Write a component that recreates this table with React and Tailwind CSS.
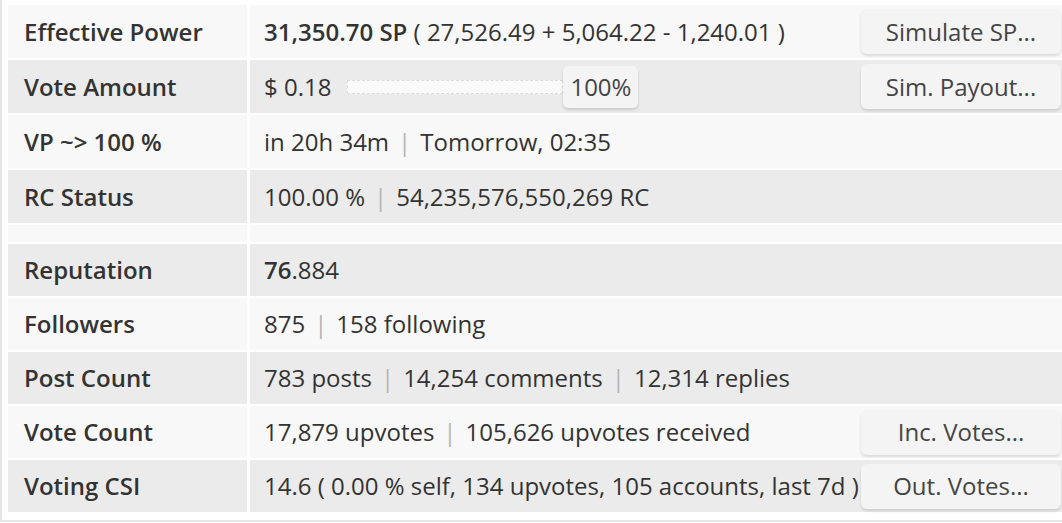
const Sep = () => <span className="px-[9px] text-[#b5b5b5]">|</span>

const Btn = ({ children }) => (
  <div className="w-[200px] h-[45px] flex items-center justify-center rounded-[6px] bg-[#f4f4f4] text-[#444] shadow-[0_2px_3px_rgba(0,0,0,0.12)]">
    {children}
  </div>
)

const Row = ({ label, shade, tall, children, button }) => {
  const bg = shade ? 'bg-[#ebebeb]' : 'bg-[#f8f8f8]'
  return (
    <div className={`flex gap-[3px] ${tall ? 'h-[53px]' : 'h-[52px]'}`}>
      <div className={`w-[239px] flex-none flex items-center pl-[16px] font-semibold ${bg}`}>{label}</div>
      <div className={`flex-1 flex items-center justify-between pl-[14px] ${bg}`}>
        <div className="flex items-center whitespace-nowrap">{children}</div>
        {button && <div className="mr-[1px]"><Btn>{button}</Btn></div>}
      </div>
    </div>
  )
}

export default function App() {
  return (
    <div className="w-[1062px] h-[523px] overflow-hidden bg-white font-['Open_Sans',sans-serif] text-[24px] text-[#333]">
      <div className="h-[522px] border-l-2 border-b-2 border-[#e6e6e6] pl-[6px] pt-[5px]">
        <div className="flex flex-col gap-[2px]">
          <Row label="Effective Power" tall button="Simulate SP...">
            <span className="font-semibold">31,350.70 SP</span>
            <span>&nbsp;( 27,526.49 + 5,064.22 - 1,240.01 )</span>
          </Row>
          <Row label="Vote Amount" shade tall button="Sim. Payout...">
            <span>$ 0.18</span>
            <div className="ml-[16px] w-[216px] h-[14px] bg-[#fafafa] border border-dashed border-[#dcdcdc]" />
            <div className="h-[42px] w-[75px] flex items-center justify-center rounded-[5px] bg-[#f4f4f4] text-[#444] shadow-[0_2px_3px_rgba(0,0,0,0.14)]">
              100%
            </div>
          </Row>
          <Row label="VP ~> 100 %" tall>
            <span>in 20h 34m</span>
            <Sep />
            <span>Tomorrow, 02:35</span>
          </Row>
          <Row label="RC Status" shade tall>
            <span>100.00 %</span>
            <Sep />
            <span>54,235,576,550,269 RC</span>
          </Row>
          <div className="flex gap-[3px] h-[17px]">
            <div className="w-[239px] flex-none bg-[#f8f8f8]" />
            <div className="flex-1 bg-[#f8f8f8]" />
          </div>
          <Row label="Reputation" shade>
            <span className="font-semibold">76</span>
            <span>.884</span>
          </Row>
          <Row label="Followers">
            <span>875</span>
            <Sep />
            <span>158 following</span>
          </Row>
          <Row label="Post Count" shade>
            <span>783 posts</span>
            <Sep />
            <span>14,254 comments</span>
            <Sep />
            <span>12,314 replies</span>
          </Row>
          <Row label="Vote Count" button="Inc. Votes...">
            <span>17,879 upvotes</span>
            <Sep />
            <span>105,626 upvotes received</span>
          </Row>
          <Row label="Voting CSI" shade button="Out. Votes...">
            <span>14.6 ( 0.00 % self, 134 upvotes, 105 accounts, last 7d )</span>
          </Row>
        </div>
      </div>
    </div>
  )
}
